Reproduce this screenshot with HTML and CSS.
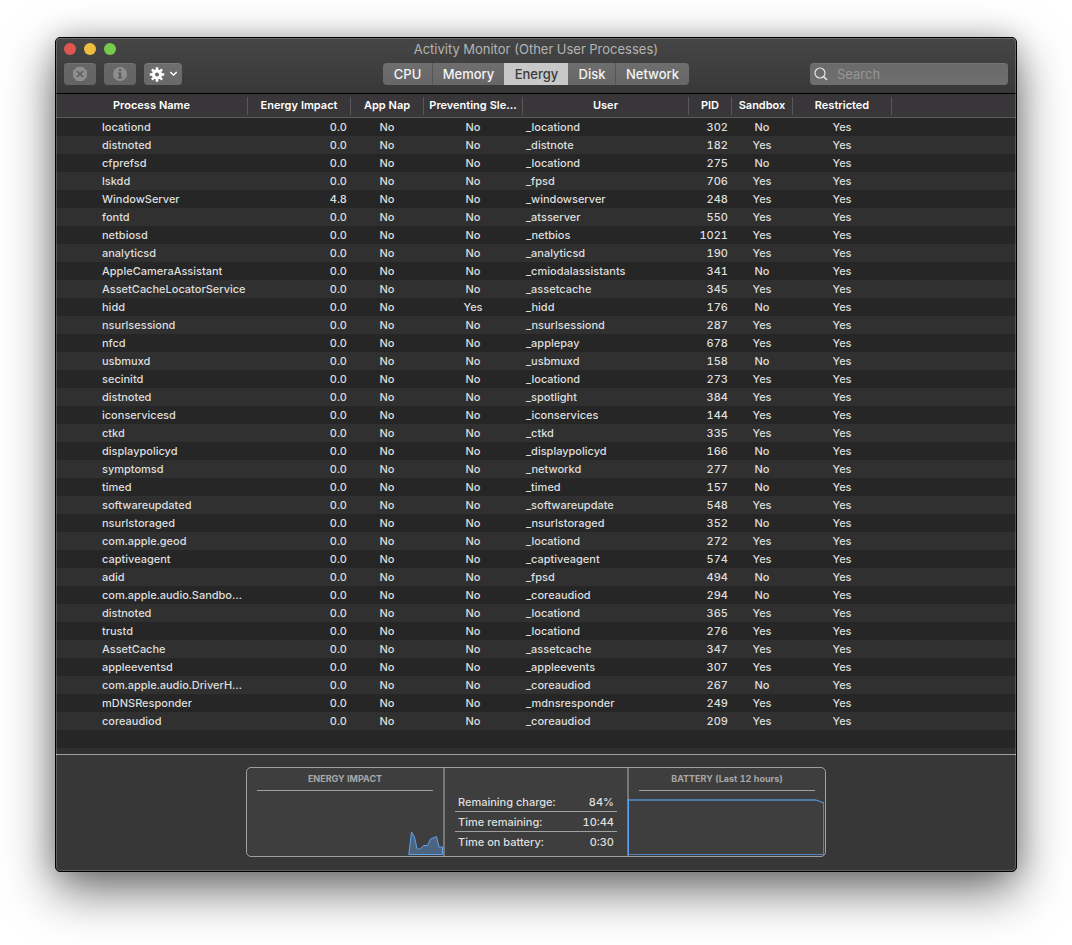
FILE: index.html
```
<!DOCTYPE html>
<html lang="en">
<head>
<meta charset="utf-8">
<title>Activity Monitor</title>
<link rel="stylesheet" href="styles.css">
</head>
<body>
<main class="window">
  <header class="titlebar">
    <div class="title-row">
      <div class="lights">
        <button class="light close" aria-label="Close"></button>
        <button class="light minimize" aria-label="Minimize"></button>
        <button class="light zoom" aria-label="Zoom"></button>
      </div>
      <h1 class="title">Activity Monitor (Other User Processes)</h1>
    </div>
    <div class="toolbar">
      <div class="actions">
        <button class="tool" disabled aria-label="Quit process">
          <svg width="16" height="16" viewBox="0 0 16 16"><path d="M5 1h6l4 4v6l-4 4H5l-4-4V5z" fill="#8e8e8e"/><path d="M5 5l6 6M11 5l-6 6" stroke="#5e5e5e" stroke-width="1.6"/></svg>
        </button>
        <button class="tool" disabled aria-label="Process information">
          <svg width="16" height="16" viewBox="0 0 16 16"><circle cx="8" cy="8" r="7" fill="#8e8e8e"/><rect x="7" y="3" width="2.2" height="2.2" fill="#5e5e5e"/><path d="M6 6.5h3.2v4.500h1.100v1.500H5.800V11H7V8H6z" fill="#5e5e5e"/></svg>
        </button>
        <button class="tool menu" aria-label="Options">
          <svg width="28" height="16" viewBox="0 0 28 16"><g transform="translate(8 8.500)"><g fill="#fff"><rect x="-1.300" y="-7.200" width="2.600" height="14.400"/><rect x="-1.300" y="-7.200" width="2.600" height="14.400" transform="rotate(45)"/><rect x="-1.300" y="-7.200" width="2.600" height="14.400" transform="rotate(90)"/><rect x="-1.300" y="-7.200" width="2.600" height="14.400" transform="rotate(135)"/></g><circle r="3.500" fill="none" stroke="#fff" stroke-width="3.200"/><circle r="2" fill="#6a6a6a"/></g><path d="M21.200 6l3.300 3 3.300-3" fill="none" stroke="#fff" stroke-width="1.500"/></svg>
        </button>
      </div>
      <nav class="segments" aria-label="Views">
        <button class="segment cpu">CPU</button>
        <button class="segment memory">Memory</button>
        <button class="segment energy selected" aria-pressed="true">Energy</button>
        <button class="segment disk">Disk</button>
        <button class="segment network">Network</button>
      </nav>
      <label class="search">
        <svg width="16" height="16" viewBox="0 0 16 16" aria-hidden="true"><circle cx="7" cy="7" r="5" fill="none" stroke="#e4e4e4" stroke-width="1.200"/><path d="M10.600 10.600L14 14" stroke="#e4e4e4" stroke-width="1.500"/></svg>
        <input class="search-input" type="search" placeholder="Search" aria-label="Search">
      </label>
    </div>
  </header>
  <section class="processes">
    <table class="table">
      <colgroup><col class="c-name"><col class="c-impact"><col class="c-nap"><col class="c-sleep"><col class="c-user"><col class="c-pid"><col class="c-sandbox"><col class="c-restricted"><col></colgroup>
      <thead><tr><th><span>Process Name</span></th><th><span>Energy Impact</span></th><th><span>App Nap</span></th><th><span>Preventing Sle…</span></th><th><span>User</span></th><th><span>PID</span></th><th><span>Sandbox</span></th><th><span>Restricted</span></th><th></th></tr></thead>
      <tbody>
<tr><td>locationd</td><td>0.0</td><td>No</td><td>No</td><td>_locationd</td><td>302</td><td>No</td><td>Yes</td><td></td></tr>
<tr><td>distnoted</td><td>0.0</td><td>No</td><td>No</td><td>_distnote</td><td>182</td><td>Yes</td><td>Yes</td><td></td></tr>
<tr><td>cfprefsd</td><td>0.0</td><td>No</td><td>No</td><td>_locationd</td><td>275</td><td>No</td><td>Yes</td><td></td></tr>
<tr><td>lskdd</td><td>0.0</td><td>No</td><td>No</td><td>_fpsd</td><td>706</td><td>Yes</td><td>Yes</td><td></td></tr>
<tr><td>WindowServer</td><td>4.8</td><td>No</td><td>No</td><td>_windowserver</td><td>248</td><td>Yes</td><td>Yes</td><td></td></tr>
<tr><td>fontd</td><td>0.0</td><td>No</td><td>No</td><td>_atsserver</td><td>550</td><td>Yes</td><td>Yes</td><td></td></tr>
<tr><td>netbiosd</td><td>0.0</td><td>No</td><td>No</td><td>_netbios</td><td>1021</td><td>Yes</td><td>Yes</td><td></td></tr>
<tr><td>analyticsd</td><td>0.0</td><td>No</td><td>No</td><td>_analyticsd</td><td>190</td><td>Yes</td><td>Yes</td><td></td></tr>
<tr><td>AppleCameraAssistant</td><td>0.0</td><td>No</td><td>No</td><td>_cmiodalassistants</td><td>341</td><td>No</td><td>Yes</td><td></td></tr>
<tr><td>AssetCacheLocatorService</td><td>0.0</td><td>No</td><td>No</td><td>_assetcache</td><td>345</td><td>Yes</td><td>Yes</td><td></td></tr>
<tr><td>hidd</td><td>0.0</td><td>No</td><td>Yes</td><td>_hidd</td><td>176</td><td>No</td><td>Yes</td><td></td></tr>
<tr><td>nsurlsessiond</td><td>0.0</td><td>No</td><td>No</td><td>_nsurlsessiond</td><td>287</td><td>Yes</td><td>Yes</td><td></td></tr>
<tr><td>nfcd</td><td>0.0</td><td>No</td><td>No</td><td>_applepay</td><td>678</td><td>Yes</td><td>Yes</td><td></td></tr>
<tr><td>usbmuxd</td><td>0.0</td><td>No</td><td>No</td><td>_usbmuxd</td><td>158</td><td>No</td><td>Yes</td><td></td></tr>
<tr><td>secinitd</td><td>0.0</td><td>No</td><td>No</td><td>_locationd</td><td>273</td><td>Yes</td><td>Yes</td><td></td></tr>
<tr><td>distnoted</td><td>0.0</td><td>No</td><td>No</td><td>_spotlight</td><td>384</td><td>Yes</td><td>Yes</td><td></td></tr>
<tr><td>iconservicesd</td><td>0.0</td><td>No</td><td>No</td><td>_iconservices</td><td>144</td><td>Yes</td><td>Yes</td><td></td></tr>
<tr><td>ctkd</td><td>0.0</td><td>No</td><td>No</td><td>_ctkd</td><td>335</td><td>Yes</td><td>Yes</td><td></td></tr>
<tr><td>displaypolicyd</td><td>0.0</td><td>No</td><td>No</td><td>_displaypolicyd</td><td>166</td><td>No</td><td>Yes</td><td></td></tr>
<tr><td>symptomsd</td><td>0.0</td><td>No</td><td>No</td><td>_networkd</td><td>277</td><td>No</td><td>Yes</td><td></td></tr>
<tr><td>timed</td><td>0.0</td><td>No</td><td>No</td><td>_timed</td><td>157</td><td>No</td><td>Yes</td><td></td></tr>
<tr><td>softwareupdated</td><td>0.0</td><td>No</td><td>No</td><td>_softwareupdate</td><td>548</td><td>Yes</td><td>Yes</td><td></td></tr>
<tr><td>nsurlstoraged</td><td>0.0</td><td>No</td><td>No</td><td>_nsurlstoraged</td><td>352</td><td>No</td><td>Yes</td><td></td></tr>
<tr><td>com.apple.geod</td><td>0.0</td><td>No</td><td>No</td><td>_locationd</td><td>272</td><td>Yes</td><td>Yes</td><td></td></tr>
<tr><td>captiveagent</td><td>0.0</td><td>No</td><td>No</td><td>_captiveagent</td><td>574</td><td>Yes</td><td>Yes</td><td></td></tr>
<tr><td>adid</td><td>0.0</td><td>No</td><td>No</td><td>_fpsd</td><td>494</td><td>No</td><td>Yes</td><td></td></tr>
<tr><td>com.apple.audio.Sandbo…</td><td>0.0</td><td>No</td><td>No</td><td>_coreaudiod</td><td>294</td><td>No</td><td>Yes</td><td></td></tr>
<tr><td>distnoted</td><td>0.0</td><td>No</td><td>No</td><td>_locationd</td><td>365</td><td>Yes</td><td>Yes</td><td></td></tr>
<tr><td>trustd</td><td>0.0</td><td>No</td><td>No</td><td>_locationd</td><td>276</td><td>Yes</td><td>Yes</td><td></td></tr>
<tr><td>AssetCache</td><td>0.0</td><td>No</td><td>No</td><td>_assetcache</td><td>347</td><td>Yes</td><td>Yes</td><td></td></tr>
<tr><td>appleeventsd</td><td>0.0</td><td>No</td><td>No</td><td>_appleevents</td><td>307</td><td>Yes</td><td>Yes</td><td></td></tr>
<tr><td>com.apple.audio.DriverH…</td><td>0.0</td><td>No</td><td>No</td><td>_coreaudiod</td><td>267</td><td>No</td><td>Yes</td><td></td></tr>
<tr><td>mDNSResponder</td><td>0.0</td><td>No</td><td>No</td><td>_mdnsresponder</td><td>249</td><td>Yes</td><td>Yes</td><td></td></tr>
<tr><td>coreaudiod</td><td>0.0</td><td>No</td><td>No</td><td>_coreaudiod</td><td>209</td><td>Yes</td><td>Yes</td><td></td></tr>
      </tbody>
    </table>
  </section>
  <footer class="summary">
    <div class="panel">
      <section class="chart impact">
        <h2 class="chart-title">ENERGY IMPACT</h2>
        <svg class="impact-graph" width="35" height="25" viewBox="0 0 35 25"><path d="M.8 23.500L3.500 1 6.500 6 9 17.500Q10.500 19 12.500 17.500L15.500 14.500h4L22.500 8l6-2.500 2.500 10.500h3.500v7.500z" fill="#4c6480" stroke="#5ea2ec"/></svg>
      </section>
      <dl class="stats">
        <div class="stat"><dt>Remaining charge:</dt><dd>84%</dd></div>
        <div class="stat"><dt>Time remaining:</dt><dd>10:44</dd></div>
        <div class="stat"><dt>Time on battery:</dt><dd>0:30</dd></div>
      </dl>
      <section class="chart battery">
        <h2 class="chart-title">BATTERY (Last 12 hours)</h2>
        <svg class="battery-graph" width="197" height="58" viewBox="0 0 197 58"><path d="M0 2H188" stroke="#4f79a8" stroke-width="2"/><path d="M.5 56.500V2M195.500 5V56.500H0" fill="none" stroke="#4f83c0"/><path d="M.5 56V1M188 2L196 5" fill="none" stroke="#5ea2ec"/></svg>
      </section>
    </div>
  </footer>
</main>
</body>
</html>
```
FILE: styles.css
```
* { box-sizing: border-box; }
body {
  margin: 0;
  padding: 37px 55px 73px;
  min-height: 100vh;
  display: flex;
  background: #fff;
  color: #dedede;
  font: 500 11px/18px Inter, "Liberation Sans", sans-serif;
  font-variant-numeric: tabular-nums;
}
button, input { font: inherit; color: inherit; border: 0; margin: 0; padding: 0; }
h1, h2, dl, dd { margin: 0; font: inherit; }
svg { display: block; }

.window {
  position: relative;
  flex: 1;
  display: flex;
  flex-direction: column;
  border: 1px solid #000;
  border-radius: 5px;
  overflow: hidden;
  background: #373737;
  box-shadow: 0 18px 50px rgba(0, 0, 0, .58), 0 0 24px rgba(0, 0, 0, .16);
}
.window::after {
  content: "";
  position: absolute;
  inset: 0;
  border: 1px solid rgba(255, 255, 255, .2);
  border-radius: 4px;
  pointer-events: none;
}

.titlebar {
  padding: 2px 8px 8px;
  border-bottom: 1px solid #000;
  background: linear-gradient(#464646, #383838);
}
.title-row { display: grid; grid-template-columns: 1fr auto 1fr; align-items: center; height: 18px; margin-bottom: 5px; }
.lights { display: flex; gap: 8px; }
.light { width: 12px; height: 12px; border-radius: 50%; }
.close { background: #e0564f; }
.minimize { background: #eebc3f; }
.zoom { background: #76ca4c; }
.title { color: #b4b4b4; font-size: 13px; font-weight: 400; }

.toolbar { display: grid; grid-template-columns: 1fr auto 1fr; align-items: center; }
.actions { display: flex; gap: 8px; }
.tool {
  display: flex;
  align-items: center;
  justify-content: center;
  width: 32px;
  height: 22px;
  border-radius: 4px;
  background: linear-gradient(#686868, #646464);
  box-shadow: inset 0 1px rgba(255, 255, 255, .08);
}
.menu { width: 38px; background: linear-gradient(#6e6e6e, #696969); }
.segments { display: flex; border-radius: 4px; overflow: hidden; background: linear-gradient(#6e6e6e, #676767); }
.segment { height: 22px; background: none; color: #f4f4f4; font-size: 13px; }
.segment + .segment { border-left: 1px solid #555; }
.segment.selected { background: #c8c8c8; color: #3b3b3b; border-color: #c8c8c8; }
.segment.selected + .segment { border-color: #6a6a6a; }
.cpu { width: 49px; }
.memory { width: 72px; }
.energy { width: 64px; }
.disk { width: 47px; }
.network { width: 74px; }
.search {
  justify-self: end;
  display: flex;
  align-items: center;
  gap: 8px;
  width: 198px;
  height: 22px;
  padding: 0 3px;
  border-radius: 4px;
  background: linear-gradient(#6a6a6a, #6f6f6f);
  box-shadow: inset 0 1px rgba(255, 255, 255, .08);
}
.search-input { flex: 1; min-width: 0; background: none; outline: 0; font-size: 13px; font-weight: 400; }
.search-input::placeholder { color: #969696; opacity: 1; }

.processes {
  flex: 1;
  background: repeating-linear-gradient(#262626 0 18px, #303030 18px 36px) 0 24px;
}
.table { width: 100%; table-layout: fixed; border-collapse: collapse; }
.c-name { width: 192px; }
.c-impact { width: 103px; }
.c-nap { width: 73px; }
.c-sleep { width: 99px; }
.c-user { width: 166px; }
.c-pid { width: 43px; }
.c-sandbox { width: 61px; }
.c-restricted { width: 99px; }
.table thead { background: #383639; }
.table th {
  height: 24px;
  padding: 0;
  color: #fff;
  font-weight: 600;
  white-space: nowrap;
  box-shadow: inset 0 -1px #5c5c5c;
}
.table th span { display: block; padding-bottom: 2px; border-right: 1px solid #59575a; line-height: 16px; }
.table td { height: 18px; padding: 0 1px 0 0; text-align: center; white-space: nowrap; }
.table td:nth-child(1) { padding-left: 46px; text-align: left; }
.table td:nth-child(2), .table td:nth-child(6) { padding-right: 4px; text-align: right; }
.table td:nth-child(5) { padding-left: 3px; text-align: left; }

.summary {
  display: flex;
  justify-content: center;
  padding: 12px 12px 14px;
  border-top: 1px solid #a0a0a0;
}
.panel {
  display: flex;
  height: 90px;
  border: 1px solid #a0a0a0;
  border-radius: 5px;
  overflow: hidden;
  background: #3e3e3e;
}
.chart { display: flex; flex-direction: column; justify-content: space-between; width: 196px; }
.chart-title {
  margin: 0 10px;
  padding: 2px 0;
  border-bottom: 1px solid #a0a0a0;
  color: #a8a8a8;
  font-size: 9px;
  font-weight: 700;
  text-align: center;
}
.impact-graph { align-self: flex-end; }
.battery-graph { margin-left: -1px; }
.stats {
  width: 186px;
  padding: 24px 10px 0;
  border: solid #777;
  border-width: 0 2px;
}
.stat { display: flex; justify-content: space-between; height: 20px; padding: 0 3px; border-bottom: 1px solid #a0a0a0; line-height: 20px; }
.stat:last-child { border-bottom: 0; }
```
